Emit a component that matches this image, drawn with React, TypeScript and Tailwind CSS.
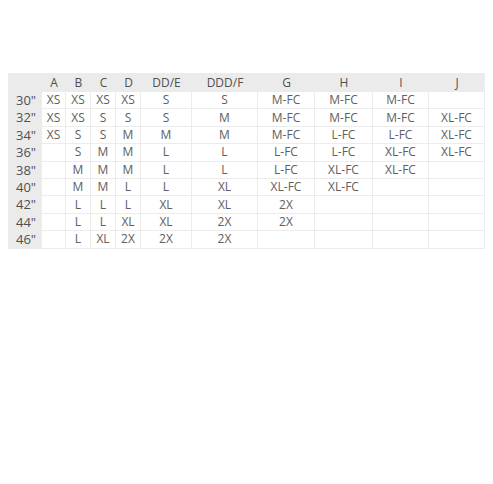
const cols = ["A", "B", "C", "D", "DD/E", "DDD/F", "G", "H", "I", "J"];

const rows: [string, string[]][] = [
  ['30"', ["XS", "XS", "XS", "XS", "S", "S", "M-FC", "M-FC", "M-FC", ""]],
  ['32"', ["XS", "XS", "S", "S", "S", "M", "M-FC", "M-FC", "M-FC", "XL-FC"]],
  ['34"', ["XS", "S", "S", "M", "M", "M", "M-FC", "L-FC", "L-FC", "XL-FC"]],
  ['36"', ["", "S", "M", "M", "L", "L", "L-FC", "L-FC", "XL-FC", "XL-FC"]],
  ['38"', ["", "M", "M", "M", "L", "L", "L-FC", "XL-FC", "XL-FC", ""]],
  ['40"', ["", "M", "M", "L", "L", "XL", "XL-FC", "XL-FC", "", ""]],
  ['42"', ["", "L", "L", "L", "XL", "XL", "2X", "", "", ""]],
  ['44"', ["", "L", "L", "XL", "XL", "2X", "2X", "", "", ""]],
  ['46"', ["", "L", "XL", "2X", "2X", "2X", "", "", "", ""]],
];

export default function App() {
  return (
    <div className="w-[493px] h-[484px] bg-white pt-[73px] pl-[8px] font-['Open_Sans',sans-serif] text-[12px] text-[#606060]">
      <div className="grid w-[477px] grid-cols-[34px_24px_25px_25px_25px_51px_66px_57px_58px_56px_56px] grid-rows-[19px_repeat(9,17.4px)] bg-[#ebebeb]">
        <div />
        {cols.map((c) => (
          <div key={c} className="flex items-center justify-center text-[#505050]">
            {c}
          </div>
        ))}
        {rows.map(([label, cells]) => (
          <div key={label} className="contents">
            <div className="flex items-center justify-center pl-[2px] text-[13px] text-[#505050]">{label}</div>
            {cells.map((v, i) => (
              <div
                key={i}
                className="flex items-center justify-center bg-white border-r border-b border-[#ececec]"
              >
                {v}
              </div>
            ))}
          </div>
        ))}
      </div>
    </div>
  );
}
